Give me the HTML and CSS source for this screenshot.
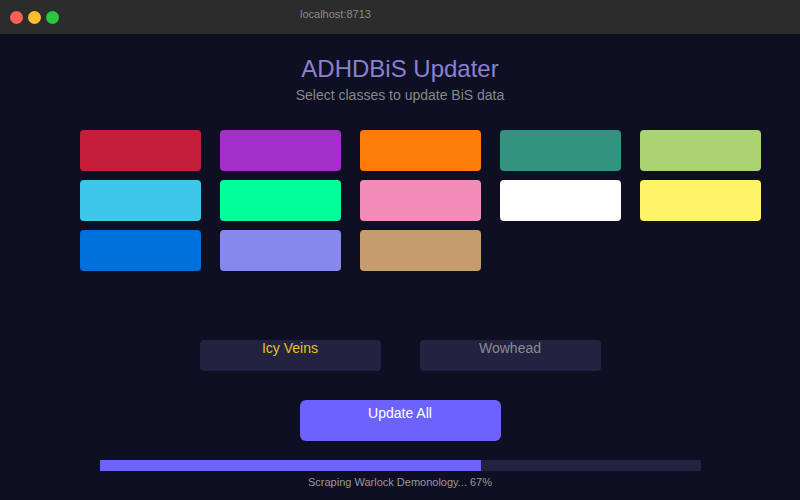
FILE: index.html
```html
<!DOCTYPE html>
<html>
<head>
<meta charset="utf-8">
<title>ADHDBiS Updater</title>
<link rel="stylesheet" href="styles.css">
</head>
<body>
<div class="titlebar">
  <div class="lights">
    <span class="light red"></span>
    <span class="light yellow"></span>
    <span class="light green"></span>
  </div>
  <span class="url">localhost:8713</span>
</div>
<main class="app">
  <h1 class="title">ADHDBiS Updater</h1>
  <p class="subtitle">Select classes to update BiS data</p>
  <div class="classes">
    <button class="cls dk"></button>
    <button class="cls dh"></button>
    <button class="cls druid"></button>
    <button class="cls evoker"></button>
    <button class="cls hunter"></button>
    <button class="cls mage"></button>
    <button class="cls monk"></button>
    <button class="cls paladin"></button>
    <button class="cls priest"></button>
    <button class="cls rogue"></button>
    <button class="cls shaman"></button>
    <button class="cls warlock"></button>
    <button class="cls warrior"></button>
  </div>
  <div class="sources">
    <button class="source active">Icy Veins</button>
    <button class="source">Wowhead</button>
  </div>
  <button class="update">Update All</button>
  <div class="progress"><div class="fill" style="width: 381px"></div></div>
  <p class="status">Scraping Warlock Demonology... 67%</p>
</main>
</body>
</html>
```

FILE: styles.css
```css
* { box-sizing: border-box; }
html, body {
  margin: 0;
  padding: 0;
  background: #0f0f23;
  font-family: "Liberation Sans", Arial, sans-serif;
}
.titlebar {
  height: 34px;
  background: #2c2c2c;
  display: flex;
  align-items: center;
  padding-left: 10px;
}
.lights { display: flex; gap: 5px; }
.light {
  width: 13px;
  height: 13px;
  border-radius: 50%;
  display: block;
}
.red { background: #ff5f57; }
.yellow { background: #febc2e; }
.green { background: #28c840; }
.url {
  margin-left: 241px;
  margin-top: -7px;
  font-size: 11px;
  color: #8a8a8a;
}
.app {
  display: flex;
  flex-direction: column;
  align-items: center;
  padding-top: 21px;
}
.title {
  margin: 0;
  font-size: 24px;
  line-height: 28px;
  font-weight: normal;
  color: #8b80d2;
}
.subtitle {
  margin: 4px 0 0;
  font-size: 14px;
  line-height: 16px;
  color: #888;
}
.classes {
  align-self: flex-start;
  margin: 27px 0 0 80px;
  display: grid;
  grid-template-columns: repeat(5, 121px);
  grid-auto-rows: 41px;
  gap: 9px 19px;
}
.cls {
  border: none;
  border-radius: 4px;
  padding: 0;
  margin: 0;
}
.dk { background: #c41e3a; }
.dh { background: #a330c9; }
.druid { background: #ff7c0a; }
.evoker { background: #33937f; }
.hunter { background: #aad372; }
.mage { background: #3fc7eb; }
.monk { background: #00ff98; }
.paladin { background: #f48cba; }
.priest { background: #ffffff; }
.rogue { background: #fff468; }
.shaman { background: #0070dd; }
.warlock { background: #8788ee; }
.warrior { background: #c69b6d; }
.sources {
  margin-top: 69px;
  display: flex;
  gap: 39px;
}
.source {
  width: 181px;
  height: 31px;
  border: none;
  border-radius: 4px;
  background: #222241;
  color: #8a8a8a;
  font-family: inherit;
  font-size: 14px;
  line-height: 16px;
  padding: 0;
  display: flex;
  justify-content: center;
  align-items: flex-start;
}
.source.active { color: #eec214; }
.update {
  margin-top: 29px;
  width: 201px;
  height: 41px;
  border: none;
  border-radius: 6px;
  background: #6c63ff;
  color: #fff;
  font-family: inherit;
  font-size: 14px;
  line-height: 16px;
  padding: 5px 0 0;
  display: flex;
  justify-content: center;
  align-items: flex-start;
}
.progress {
  margin-top: 19px;
  width: 601px;
  height: 11px;
  background: #222241;
}
.fill {
  height: 100%;
  background: #6c63ff;
}
.status {
  margin: 5px 0 0;
  font-size: 11px;
  line-height: 13px;
  color: #999;
}
```
